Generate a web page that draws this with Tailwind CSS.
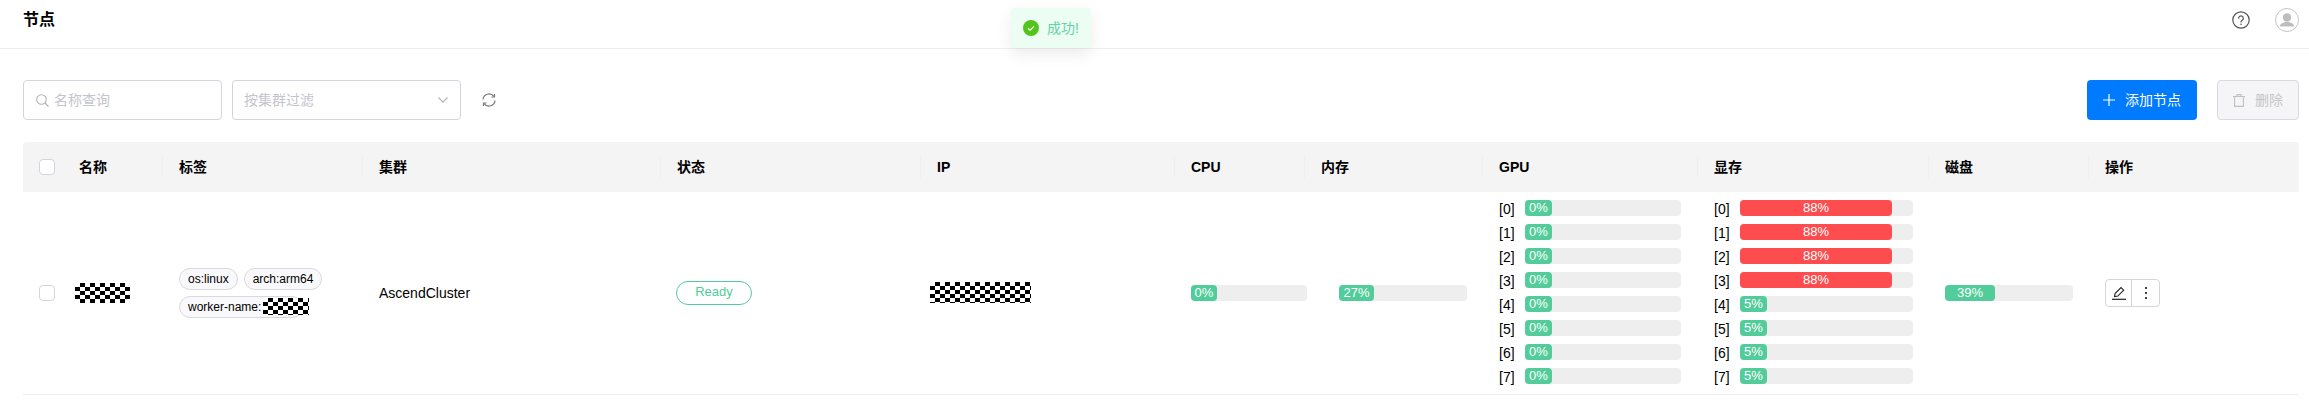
<!DOCTYPE html>
<html lang="en">
<head>
    <meta charset="UTF-8">
    <title>节点</title>
    <script src="https://cdn.jsdelivr.net/npm/@tailwindcss/browser@4"></script>
</head>
<body class="bg-white text-black font-['Liberation_Sans','Noto_Sans_CJK_SC',sans-serif]">
    <div class="relative min-h-[415px]">
        <!-- Header -->
        <header class="flex items-center justify-between h-[49px] border-b border-[#eeeef2] pl-[23px] pr-[10px]">
            <h1 class="text-base font-bold leading-none -mt-2">节点</h1>
            <div class="flex items-center gap-[25px] -mt-2">
                <svg class="w-[18px] h-[18px]" viewBox="0 0 18 18" fill="none" stroke="#555" stroke-width="1.2">
                    <circle cx="9" cy="9" r="8.2"/>
                    <path d="M6.7 7.2a2.3 2.3 0 1 1 3.5 2c-.8.5-1.2 1-1.2 1.8" stroke-linecap="round"/>
                    <circle cx="9" cy="13.3" r=".8" fill="#555" stroke="none"/>
                </svg>
                <svg class="w-6 h-6" viewBox="0 0 24 24" fill="none">
                    <circle cx="12" cy="12" r="11.5" stroke="#c4c4c4"/>
                    <circle cx="12" cy="9.5" r="4.2" fill="#bdbdbd"/>
                    <path d="M4.8 18.5c.4-3 3.4-4.5 7.2-4.5s6.800 1.500 7.200 4.500z" fill="#bdbdbd"/>
                </svg>
            </div>
        </header>

        <!-- Toast -->
        <div class="absolute left-[1011px] top-2 flex items-center gap-2 w-20 h-10 pl-3 bg-[#ecfdf4] rounded shadow-[0_6px_16px_rgba(0,0,0,0.08)] text-sm text-[#63d2a4]">
            <svg class="w-4 h-4 shrink-0" viewBox="0 0 16 16">
                <circle cx="8" cy="8" r="8" fill="#52c41a"/>
                <path d="M5 8.200l2.100 2L11 6.300" fill="none" stroke="#fff" stroke-width="1.200"/>
            </svg>
            <span>成功!</span>
        </div>

        <!-- Main Content -->
        <main class="pl-[23px] pr-[10px]">
            <div class="flex items-center justify-between mt-[31px] h-10">
                <div class="flex items-center">
                    <div class="flex items-center gap-[5px] w-[199px] h-10 pl-3 border border-[#d4d4dc] rounded text-sm text-[#c4c4cc]">
                        <svg class="w-[13px] h-[13px]" viewBox="0 0 13 13" fill="none" stroke="#b4b4b4" stroke-width="1.100">
                            <circle cx="5.500" cy="5.500" r="4.800"/>
                            <path d="M9 9l3.500 3.500"/>
                        </svg>
                        <span>名称查询</span>
                    </div>
                    <div class="flex items-center justify-between w-[229px] h-10 ml-[10px] pl-[11px] pr-3 border border-[#d4d4dc] rounded text-sm text-[#c4c4cc]">
                        <span>按集群过滤</span>
                        <svg class="w-[10px] h-[6px]" viewBox="0 0 10 6" fill="none" stroke="#b4b4b4" stroke-width="1.100">
                            <path d="M.5.500L5 5.200 9.500.500"/>
                        </svg>
                    </div>
                    <svg class="w-[14px] h-[14px] ml-[21px]" viewBox="0 0 14 14" fill="none" stroke="#777" stroke-width="1.200">
                        <path d="M1 6.500A6 6 0 0 1 11.800 3.400"/>
                        <path d="M12.500 1v3h-3"/>
                        <path d="M13 7.500A6 6 0 0 1 2.200 10.600"/>
                        <path d="M1.500 13v-3h3"/>
                    </svg>
                </div>
                <div class="flex items-center">
                    <button class="flex items-center justify-center gap-[10px] w-[110px] h-10 bg-[#007bff] rounded text-sm text-white">
                        <svg class="w-3 h-3" viewBox="0 0 12 12" stroke="#fff" stroke-width="1.200"><path d="M6 0v12M0 6h12"/></svg>
                        <span>添加节点</span>
                    </button>
                    <button class="flex items-center justify-center gap-[10px] w-[82px] h-10 ml-5 bg-[#f5f5f7] border border-[#d8d8de] rounded text-sm text-[#c4c4c8]">
                        <svg class="w-3 h-[13px]" viewBox="0 0 12 13" fill="none" stroke="#c0c0c0" stroke-width="1.100">
                            <path d="M0 2.500h12M4 2.500V.6h4v1.900M1.600 2.500v9.900h8.800V2.500"/>
                        </svg>
                        <span>删除</span>
                    </button>
                </div>
            </div>

            <table class="w-[2276px] table-fixed mt-[22px] text-sm border-collapse">
                <colgroup>
                    <col class="w-[40px]"><col class="w-[99px]"><col class="w-[200px]"><col class="w-[298px]">
                    <col class="w-[260px]"><col class="w-[254px]"><col class="w-[130px]"><col class="w-[178px]">
                    <col class="w-[215px]"><col class="w-[231px]"><col class="w-[160px]"><col class="w-[211px]">
                </colgroup>
                <thead>
                    <tr class="h-[50px] bg-[#f4f4f5] text-left font-bold">
                        <th class="pl-[16px] rounded-tl"><div class="w-4 h-4 bg-white border border-[#d4d4dc] rounded-sm"></div></th>
                        <th class="pl-[16px]">名称</th>
                        <th><div class="flex items-center h-[22px] pl-4 border-l border-[#efeff0]">标签</div></th>
                        <th><div class="flex items-center h-[22px] pl-4 border-l border-[#efeff0]">集群</div></th>
                        <th><div class="flex items-center h-[22px] pl-4 border-l border-[#efeff0]">状态</div></th>
                        <th><div class="flex items-center h-[22px] pl-4 border-l border-[#efeff0]">IP</div></th>
                        <th><div class="flex items-center h-[22px] pl-4 border-l border-[#efeff0]">CPU</div></th>
                        <th><div class="flex items-center h-[22px] pl-4 border-l border-[#efeff0]">内存</div></th>
                        <th><div class="flex items-center h-[22px] pl-4 border-l border-[#efeff0]">GPU</div></th>
                        <th><div class="flex items-center h-[22px] pl-4 border-l border-[#efeff0]">显存</div></th>
                        <th><div class="flex items-center h-[22px] pl-4 border-l border-[#efeff0]">磁盘</div></th>
                        <th class="rounded-tr"><div class="flex items-center h-[22px] pl-4 border-l border-[#efeff0]">操作</div></th>
                    </tr>
                </thead>
                <tbody>
                    <tr class="h-[202px] border-b border-[#eeeef2]">
                        <td class="pl-[16px]"><div class="w-4 h-4 border border-[#d4d4dc] rounded-sm"></div></td>
                        <td class="pl-3"><div class="w-[55px] h-5 bg-[repeating-conic-gradient(#000_0%_25%,#fff_0%_50%)] bg-[length:10px_8px]"></div></td>
                        <td class="pl-[17px]">
                            <div class="flex flex-wrap gap-[6px] text-xs">
                                <span class="flex items-center h-[22px] px-2 bg-[#f9f9fb] border border-[#d8d8e0] rounded-full">os:linux</span>
                                <span class="flex items-center h-[22px] px-2 bg-[#f9f9fb] border border-[#d8d8e0] rounded-full">arch:arm64</span>
                                <span class="flex items-center w-[124px] h-[22px] pl-2 bg-[#f9f9fb] border border-[#d8d8e0] rounded-full whitespace-nowrap">worker-name:<i class="shrink-0 w-[46px] h-[17px] ml-[2px] bg-[repeating-conic-gradient(#000_0%_25%,#fff_0%_50%)] bg-[length:10px_8px]"></i></span>
                            </div>
                        </td>
                        <td class="pl-[17px]">AscendCluster</td>
                        <td class="pl-[16px]">
                            <span class="flex items-center justify-center w-[76px] h-6 border border-[#52cc9a] rounded-full text-[13px] text-[#52cc9a]">Ready</span>
                        </td>
                        <td class="pl-[10px]"><div class="w-[101px] h-[21px] bg-[repeating-conic-gradient(#000_0%_25%,#fff_0%_50%)] bg-[length:10px_8px]"></div></td>
                        <td class="pl-[17px]">
                            <div class="w-[116px] h-4 bg-[#eeeeee] rounded-sm"><div class="w-[26px] h-4 bg-[#52cc9a] rounded-sm text-[13px] leading-4 text-white text-center">0%</div></div>
                        </td>
                        <td class="pl-[35px]">
                            <div class="w-[128px] h-4 bg-[#eeeeee] rounded-sm"><div class="w-[35px] h-4 bg-[#52cc9a] rounded-sm text-[13px] leading-4 text-white text-center">27%</div></div>
                        </td>
                        <td class="pl-[17px]"><div id="gpu-list" class="flex flex-col gap-2 pb-[2px]"></div></td>
                        <td class="pl-[17px]"><div id="mem-list" class="flex flex-col gap-2 pb-[2px]"></div></td>
                        <td class="pl-[17px]">
                            <div class="w-[128px] h-4 bg-[#eeeeee] rounded-sm"><div class="w-[50px] h-4 bg-[#52cc9a] rounded-sm text-[13px] leading-4 text-white text-center">39%</div></div>
                        </td>
                        <td class="pl-[17px]">
                            <div class="flex w-[55px] h-7 border border-[#d4d4dc] rounded">
                                <div class="flex items-center justify-center w-[26px] border-r border-[#d4d4dc]">
                                    <svg class="w-[14px] h-[14px]" viewBox="0 0 14 14" fill="none" stroke="#222" stroke-width="1.100">
                                        <path d="M2.500 10.500l.6-3L9 1.600l2.700 2.600-5.900 5.900z"/>
                                        <path d="M0 13.300h14" stroke-width="1.200"/>
                                    </svg>
                                </div>
                                <div class="flex flex-col items-center justify-center gap-[3px] flex-1">
                                    <i class="w-[2px] h-[2px] bg-[#444]"></i><i class="w-[2px] h-[2px] bg-[#444]"></i><i class="w-[2px] h-[2px] bg-[#444]"></i>
                                </div>
                            </div>
                        </td>
                    </tr>
                </tbody>
            </table>
        </main>
    </div>

    <script>
        const gpus = [0, 0, 0, 0, 0, 0, 0, 0];
        const mems = [88, 88, 88, 88, 5, 5, 5, 5];

        function barRow(index, value, barClass, fillClass) {
            return `
                <div class="flex items-start h-4">
                    <span class="w-[26px] pt-px leading-4">[${index}]</span>
                    <div class="${barClass} h-4 bg-[#eeeeee] rounded-sm">
                        <div class="${fillClass} h-4 rounded-sm text-[13px] leading-4 text-white text-center">${value}%</div>
                    </div>
                </div>`;
        }

        document.getElementById('gpu-list').innerHTML = gpus.map((v, i) => barRow(i, v, 'w-[156px]', 'w-[27px] bg-[#52cc9a]')).join('');
        document.getElementById('mem-list').innerHTML = mems.map((v, i) => barRow(i, v, 'w-[173px]', v > 80 ? 'w-[152px] bg-[#ff4d4f]' : 'w-[27px] bg-[#52cc9a]')).join('');
    </script>
</body>
</html>
